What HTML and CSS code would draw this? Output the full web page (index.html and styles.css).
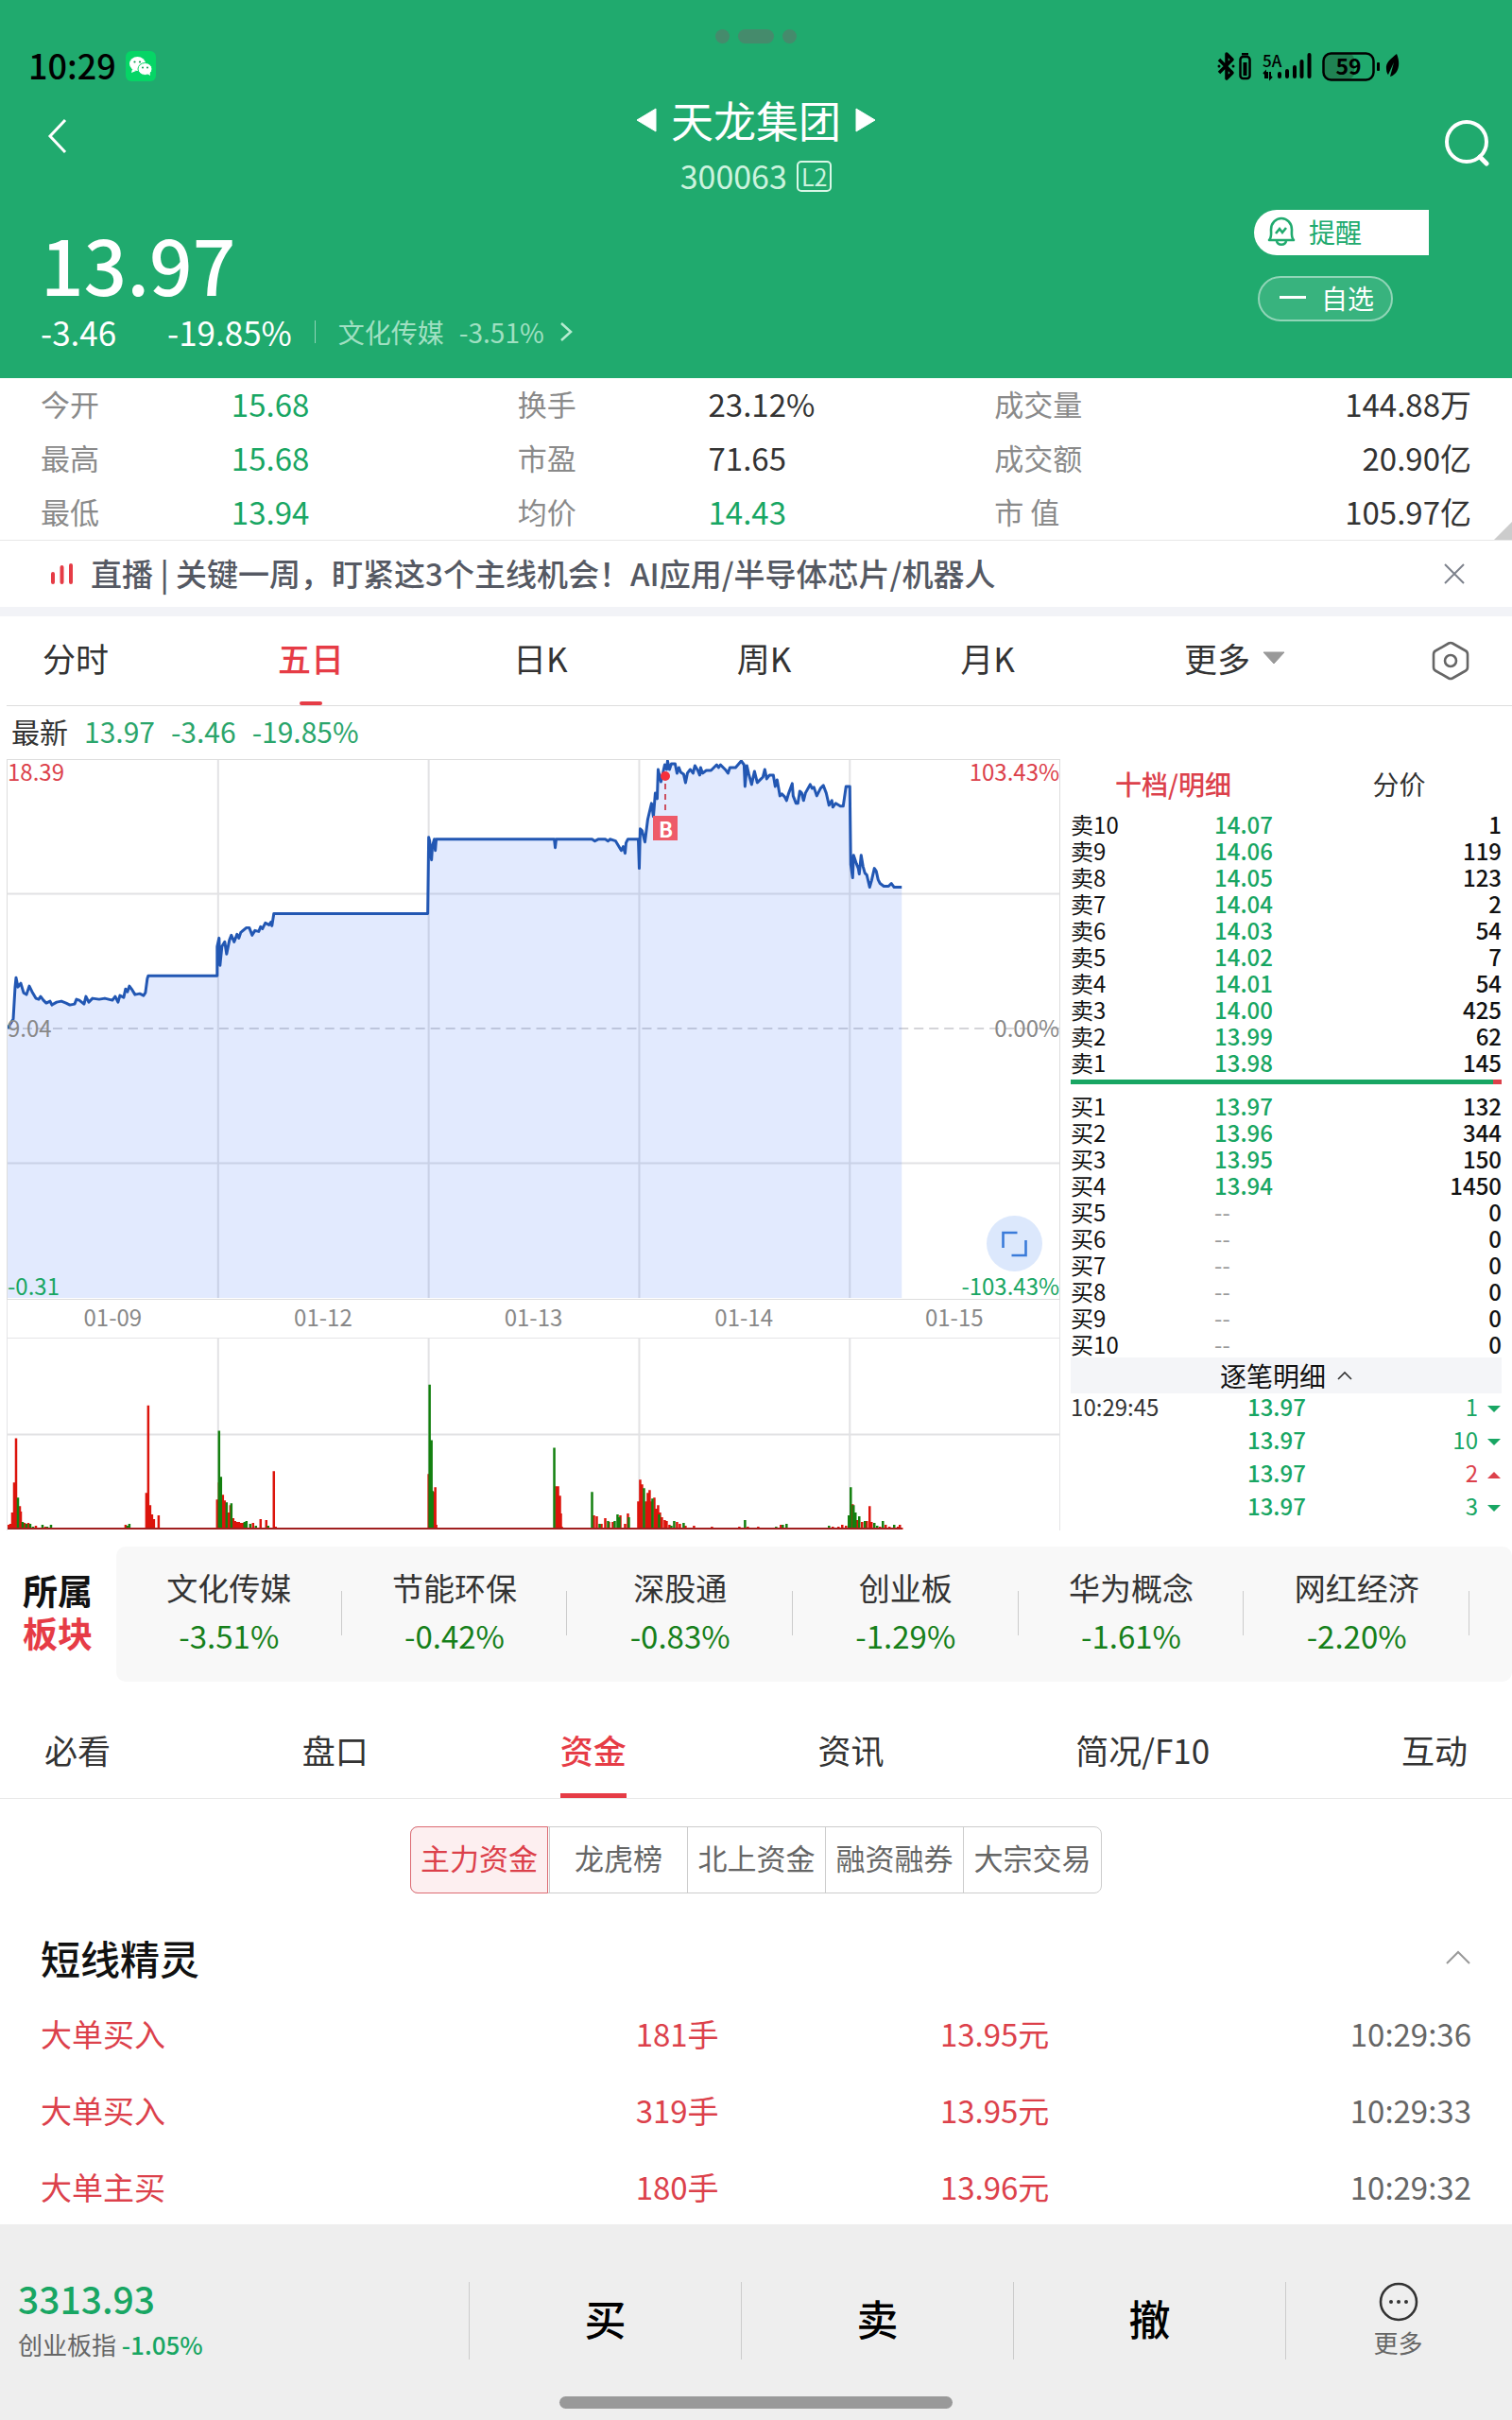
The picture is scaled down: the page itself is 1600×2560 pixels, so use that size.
FILE: index.html
```html
<!DOCTYPE html>
<html lang="zh-CN">
<head>
    <meta charset="UTF-8">
    <meta name="viewport" content="width=device-width, initial-scale=1.0">
    <meta name="theme-color" content="#20aa6e">
    <title>天龙集团 300063</title>
    <link rel="stylesheet" href="styles.css">
</head>
<body>
    <header class="header">
        <div class="camera"><span></span><span class="wide"></span><span></span></div>

        <div class="status-bar">
            <span class="clock">10:29</span>
            <svg class="wechat" width="32" height="32" viewBox="0 0 32 32">
                <rect width="32" height="32" rx="6" fill="#06d566"/>
                <ellipse cx="12.500" cy="13.500" rx="8.500" ry="7.500" fill="#fff"/>
                <path d="M7 19l-1 4 5-2z" fill="#fff"/>
                <ellipse cx="20.500" cy="19" rx="7.500" ry="6.500" fill="#fff" stroke="#06d566"/>
                <path d="M23 24l3 2-0.500-4z" fill="#fff"/>
                <g fill="#0a9a4e"><circle cx="9.500" cy="11.500" r="1.100"/><circle cx="15" cy="11.500" r="1.100"/><circle cx="18" cy="17.500" r="1"/><circle cx="23" cy="17.500" r="1"/></g>
            </svg>
            <svg class="status-icons" width="196" height="34" viewBox="0 0 196 34">
                <!-- bluetooth -->
                <path d="M2 10l14 14-6 6V4l6 6L2 24" fill="none" stroke="#000" stroke-width="3.500" stroke-linejoin="round"/>
                <circle cx="2" cy="17" r="1.500"/><circle cx="17" cy="17" r="1.500"/>
                <rect x="24.500" y="7" width="10" height="23" rx="3" fill="none" stroke="#000" stroke-width="2.500"/>
                <rect x="27.500" y="13" width="4" height="14"/><rect x="26" y="3" width="7" height="2.500"/>
                <!-- signal -->
                <text x="48" y="18" font-size="17" font-weight="500">5A</text>
                <path d="M49 25l2-2v7M53 23v7M56 23v7l2-2" fill="none" stroke="#000" stroke-width="2"/>
                <path d="M66 25v3M74 22v6M82 18v10M89.500 12v16M97.500 5v23" stroke="#000" stroke-width="4" stroke-linecap="round"/>
                <!-- battery -->
                <rect x="112" y="3" width="33" height="28" rx="7" fill="#208253"/>
                <rect x="112.500" y="3.500" width="53" height="28" rx="8" fill="none" stroke="#000" stroke-width="2.500"/>
                <text x="139" y="25.500" font-size="23" font-weight="700" text-anchor="middle">59</text>
                <rect x="169" y="13" width="3" height="9" rx="1"/>
                <path d="M190 4c-6 5-12 9-11 16 0 4 2 6 2 6l6-13-4 15c8-2 12-12 7-24z"/>
            </svg>
        </div>

        <div class="title-bar">
            <button class="icon-btn back" aria-label="返回">
                <svg width="24" height="40" viewBox="0 0 24 40"><path d="M20 3L4 20l16 17" fill="none" stroke="#fff" stroke-width="3"/></svg>
            </button>
            <div class="stock">
                <div class="stock-name">
                    <button class="icon-btn" aria-label="上一只">
                        <svg width="22" height="26" viewBox="0 0 22 26"><path d="M21 1v24L1 13z" fill="#fff" stroke="#fff" stroke-linejoin="round"/></svg>
                    </button>
                    <h1>天龙集团</h1>
                    <button class="icon-btn" aria-label="下一只">
                        <svg width="22" height="26" viewBox="0 0 22 26"><path d="M1 1v24l20-12z" fill="#fff" stroke="#fff" stroke-linejoin="round"/></svg>
                    </button>
                </div>
                <div class="stock-code">300063<span class="level">L2</span></div>
            </div>
            <button class="icon-btn search" aria-label="搜索">
                <svg width="50" height="50" viewBox="0 0 50 50"><circle cx="24" cy="24" r="21" fill="none" stroke="#fff" stroke-width="4"/><path d="M38 40l7 7" stroke="#fff" stroke-width="5" stroke-linecap="round"/></svg>
            </button>
        </div>

        <div class="price-row">
            <div>
                <div class="price">13.97</div>
                <div class="change">
                    <span class="change-value">-3.46</span>
                    <span>-19.85%</span>
                    <a class="sector-link" href="#"><span>文化传媒</span><span>-3.51%</span>
                        <svg width="14" height="22" viewBox="0 0 14 22"><path d="M2 2l10 9-10 9" fill="none" stroke="#b6ecd1" stroke-width="2.500"/></svg>
                    </a>
                </div>
            </div>
            <div class="actions">
                <button class="alert-btn">
                    <svg width="30" height="32" viewBox="0 0 30 32" fill="none" stroke="#20aa6e" stroke-width="2.600"><path d="M2 25c3-3 2-7 2-11 0-7 5-12 11-12s11 5 11 12c0 4-1 8 2 11z" stroke-linejoin="round"/><path d="M10 26c1 5 9 5 10 0M9 18l4-5 3 4 4-5"/></svg>
                    提醒
                </button>
                <button class="watch-btn"><i></i>自选</button>
            </div>
        </div>
    </header>

    <dl class="quotes">
        <div><dt>今开</dt><dd class="down">15.68</dd></div>
        <div><dt>换手</dt><dd>23.12%</dd></div>
        <div><dt>成交量</dt><dd>144.88万</dd></div>
        <div><dt>最高</dt><dd class="down">15.68</dd></div>
        <div><dt>市盈</dt><dd>71.65</dd></div>
        <div><dt>成交额</dt><dd>20.90亿</dd></div>
        <div><dt>最低</dt><dd class="down">13.94</dd></div>
        <div><dt>均价</dt><dd class="down">14.43</dd></div>
        <div><dt>市 值</dt><dd>105.97亿</dd></div>
    </dl>

    <div class="live">
        <svg width="26" height="24" viewBox="0 0 26 24"><path d="M3 12v9M12.500 5v16M22 3v18" stroke="#e63c46" stroke-width="4" stroke-linecap="round"/></svg>
        <a href="#">直播 | 关键一周，盯紧这3个主线机会！AI应用/半导体芯片/机器人</a>
        <button class="icon-btn" aria-label="关闭">
            <svg width="22" height="22" viewBox="0 0 22 22"><path d="M1 1l20 20M21 1L1 21" stroke="#7d828c" stroke-width="2"/></svg>
        </button>
    </div>

    <div class="period-bar">
        <nav class="periods">
            <button>分时</button>
            <button class="active">五日</button>
            <button>日K</button>
            <button>周K</button>
            <button>月K</button>
            <button>更多<svg width="24" height="14" viewBox="0 0 24 14"><path d="M1 1h22L12 13z" fill="#999" stroke="#999" stroke-linejoin="round"/></svg></button>
        </nav>
        <button class="icon-btn" aria-label="图表设置">
            <svg width="40" height="42" viewBox="0 0 40 42" fill="none" stroke="#666" stroke-width="2.600"><path d="M18 2.500q2-1 4 0l14 8q2 1 2 4v13q0 3-2 4l-14 8q-2 1-4 0l-14-8q-2-1-2-4v-13q0-3 2-4z"/><circle cx="20" cy="21" r="6"/></svg>
        </button>
    </div>

    <p class="latest">最新<span>13.97</span><span>-3.46</span><span>-19.85%</span></p>

    <main class="market">
        <section class="chart">
            <div class="price-chart">
                <svg viewBox="7 802 1114 572" preserveAspectRatio="none">
                    <path class="grid-line" d="M7 944H1121M7 1230H1121M230 802V1373M453 802V1373M676 802V1373M899 802V1373"/>
                    <path class="grid-line dashed" d="M7 1087H1121"/>
                    <path class="area" d="M7 1087L13 1077L15 1043L16 1033L18 1043L21 1039L24 1049L27 1051L30 1042L33 1048L37 1055L40 1056L42 1053L45 1057L48 1060L52 1058L54 1062L59 1059L64 1058L69 1060L73 1062L78 1061L80 1056L83 1057L88 1061L90 1053L93 1059L97 1055L104 1056L110 1055L118 1057L121 1053L124 1059L126 1052L130 1054L132 1045L134 1048L136 1042L139 1046L142 1051L147 1050L151 1052L153 1049L155 1034L156 1031H229V1000L231 991L232 1020L234 1000L237 995L239 1008L242 993L244 988L247 995L250 987L252 991L254 985L260 980L263 980L266 988L269 983L273 984L275 979L277 981L280 975L284 977L286 974L287 978L289 965H452L453 884L454 888L456 908L457 893L459 886L460 898L461 886H586L587 895L588 886H626L629 888L633 886H640L643 888L645 886L651 888L654 893L657 898L659 894L661 901L662 890L664 886H675L676 917L677 875L679 877L682 889L685 865L689 848L691 862L693 837L695 843L696 812L699 825L703 807L705 812L706 803L708 812L710 806H714L716 816L718 810L720 815L723 817L725 826L727 816L730 812L733 816L735 808L738 813L740 818L741 810L743 816L747 813L752 813L758 807L760 810L762 807L767 812L770 816L772 810H778L784 803L787 807L788 830L790 808L792 817L795 828L798 814L801 826L804 823L807 820L809 812L811 822L814 818H818L820 830L822 823L825 840L827 838L830 841L832 845L834 838L838 827L839 840L842 848H844L846 835L848 837L850 845L852 837L857 828L859 832L861 831L864 840L868 832L871 829L874 837L877 850L880 845L881 852L884 848L889 851H892L895 830H899L900 913L902 927L903 903L906 912L908 917L909 923L911 903L913 915L915 922L917 924L920 937L922 930L925 917L927 920L929 929L931 933L935 936H940L943 933L946 937H954V1373H7Z"/>
                    <path class="line" d="M7 1087L13 1077L15 1043L16 1033L18 1043L21 1039L24 1049L27 1051L30 1042L33 1048L37 1055L40 1056L42 1053L45 1057L48 1060L52 1058L54 1062L59 1059L64 1058L69 1060L73 1062L78 1061L80 1056L83 1057L88 1061L90 1053L93 1059L97 1055L104 1056L110 1055L118 1057L121 1053L124 1059L126 1052L130 1054L132 1045L134 1048L136 1042L139 1046L142 1051L147 1050L151 1052L153 1049L155 1034L156 1031H229V1000L231 991L232 1020L234 1000L237 995L239 1008L242 993L244 988L247 995L250 987L252 991L254 985L260 980L263 980L266 988L269 983L273 984L275 979L277 981L280 975L284 977L286 974L287 978L289 965H452L453 884L454 888L456 908L457 893L459 886L460 898L461 886H586L587 895L588 886H626L629 888L633 886H640L643 888L645 886L651 888L654 893L657 898L659 894L661 901L662 890L664 886H675L676 917L677 875L679 877L682 889L685 865L689 848L691 862L693 837L695 843L696 812L699 825L703 807L705 812L706 803L708 812L710 806H714L716 816L718 810L720 815L723 817L725 826L727 816L730 812L733 816L735 808L738 813L740 818L741 810L743 816L747 813L752 813L758 807L760 810L762 807L767 812L770 816L772 810H778L784 803L787 807L788 830L790 808L792 817L795 828L798 814L801 826L804 823L807 820L809 812L811 822L814 818H818L820 830L822 823L825 840L827 838L830 841L832 845L834 838L838 827L839 840L842 848H844L846 835L848 837L850 845L852 837L857 828L859 832L861 831L864 840L868 832L871 829L874 837L877 850L880 845L881 852L884 848L889 851H892L895 830H899L900 913L902 927L903 903L906 912L908 917L909 923L911 903L913 915L915 922L917 924L920 937L922 930L925 917L927 920L929 929L931 933L935 936H940L943 933L946 937H954"/>
                </svg>
                <span class="axis top-left up">18.39</span>
                <span class="axis top-right up">103.43%</span>
                <span class="axis mid-left">9.04</span>
                <span class="axis mid-right">0.00%</span>
                <span class="axis bottom-left down">-0.31</span>
                <span class="axis bottom-right down">-103.43%</span>
                <div class="buy-mark"><i></i><b>B</b></div>
                <button class="expand" aria-label="全屏">
                    <svg width="28" height="28" viewBox="0 0 28 28"><path d="M2 18V2h15M11 26h15V10" fill="none" stroke="#3a7bd9" stroke-width="2.600"/></svg>
                </button>
            </div>
            <div class="dates"><span>01-09</span><span>01-12</span><span>01-13</span><span>01-14</span><span>01-15</span></div>
            <div class="volume-chart">
                <svg viewBox="7 1414 1114 204" preserveAspectRatio="none">
                    <path class="grid-line" d="M7 1516H1121M230 1414V1617M453 1414V1617M676 1414V1617M899 1414V1617"/>
                    <path class="vol-up" d="M8 1617v-5M10 1617v-6M12 1617v-18M14 1617v-50M16 1617v-97M20 1617v-25M21 1617v-19M25 1617v-7M29 1617v-7M37 1617v-4M47 1617v-3M60 1617v-2M80 1617v-2M120 1617v-2M127 1617v-2M132 1617v-5M154 1617v-39M156 1617v-132M158 1617v-26M160 1617v-16M162 1617v-11M167 1617v-15M229 1617v-32M231 1617v-50M235 1617v-37M237 1617v-31M241 1617v-18M243 1617v-26M246 1617v-12M248 1617v-9M250 1617v-8M252 1617v-8M254 1617v-7M256 1617v-7M267 1617v-7M275 1617v-11M281 1617v-10M289 1617v-62M291 1617v-3M453 1617v-59M458 1617v-40M460 1617v-45M461 1617v-5M588 1617v-46M590 1617v-46M592 1617v-36M593 1617v-17M594 1617v-3M628 1617v-15M631 1617v-14M636 1617v-6M640 1617v-12M644 1617v-8M648 1617v-8M656 1617v-15M661 1617v-6M664 1617v-17M675 1617v-30M677 1617v-53M679 1617v-48M683 1617v-30M685 1617v-39M687 1617v-42M689 1617v-30M692 1617v-34M694 1617v-22M696 1617v-26M698 1617v-18M700 1617v-13M703 1617v-10M705 1617v-9M708 1617v-5M716 1617v-8M719 1617v-6M725 1617v-4M734 1617v-4M747 1617v-2M753 1617v-3M757 1617v-2M782 1617v-3M791 1617v-3M802 1617v-3M810 1617v-2M826 1617v-5M835 1617v-2M881 1617v-3M887 1617v-3M891 1617v-5M895 1617v-4M902 1617v-27M907 1617v-10M912 1617v-8M917 1617v-9M920 1617v-25M922 1617v-8M931 1617v-3M937 1617v-5M941 1617v-3M950 1617v-3M952 1617v-5M954 1617v-2"/>
                    <path class="vol-down" d="M18 1617v-34M23 1617v-8M27 1617v-6M31 1617v-6M34 1617v-3M44 1617v-5M49 1617v-3M53 1617v-5M72 1617v-2M103 1617v-2M134 1617v-4M136 1617v-6M233 1617v-56M239 1617v-29M244 1617v-28M258 1617v-8M260 1617v-9M264 1617v-6M270 1617v-4M283 1617v-4M231 1617v-105M454 1617v-154M456 1617v-95M457 1617v-41M586 1617v-87M626 1617v-40M634 1617v-6M643 1617v-9M650 1617v-9M653 1617v-16M655 1617v-13M665 1617v-13M681 1617v-44M690 1617v-33M697 1617v-16M713 1617v-9M723 1617v-7M710 1617v-4M740 1617v-2M763 1617v-2M788 1617v-10M795 1617v-2M821 1617v-3M828 1617v-5M832 1617v-6M840 1617v-2M856 1617v-1M877 1617v-4M884 1617v-2M898 1617v-15M900 1617v-45M903 1617v-26M905 1617v-18M909 1617v-14M915 1617v-9M925 1617v-7M928 1617v-4M934 1617v-9M946 1617v-5"/>
                    <path class="vol-base" d="M7 1616H954"/>
                </svg>
            </div>
        </section>

        <section class="depth">
            <nav class="depth-tabs">
                <button class="active">十档/明细</button>
                <button>分价</button>
            </nav>
            <table class="book">
                <tr><td>卖10</td><td>14.07</td><td>1</td></tr>
                <tr><td>卖9</td><td>14.06</td><td>119</td></tr>
                <tr><td>卖8</td><td>14.05</td><td>123</td></tr>
                <tr><td>卖7</td><td>14.04</td><td>2</td></tr>
                <tr><td>卖6</td><td>14.03</td><td>54</td></tr>
                <tr><td>卖5</td><td>14.02</td><td>7</td></tr>
                <tr><td>卖4</td><td>14.01</td><td>54</td></tr>
                <tr><td>卖3</td><td>14.00</td><td>425</td></tr>
                <tr><td>卖2</td><td>13.99</td><td>62</td></tr>
                <tr><td>卖1</td><td>13.98</td><td>145</td></tr>
            </table>
            <div class="ratio"></div>
            <table class="book">
                <tr><td>买1</td><td>13.97</td><td>132</td></tr>
                <tr><td>买2</td><td>13.96</td><td>344</td></tr>
                <tr><td>买3</td><td>13.95</td><td>150</td></tr>
                <tr><td>买4</td><td>13.94</td><td>1450</td></tr>
                <tr><td>买5</td><td class="none">--</td><td>0</td></tr>
                <tr><td>买6</td><td class="none">--</td><td>0</td></tr>
                <tr><td>买7</td><td class="none">--</td><td>0</td></tr>
                <tr><td>买8</td><td class="none">--</td><td>0</td></tr>
                <tr><td>买9</td><td class="none">--</td><td>0</td></tr>
                <tr><td>买10</td><td class="none">--</td><td>0</td></tr>
            </table>
            <button class="ticks-toggle">逐笔明细
                <svg width="16" height="10" viewBox="0 0 16 10"><path d="M1 9l7-7 7 7" fill="none" stroke="#333" stroke-width="1.600"/></svg>
            </button>
            <table class="ticks">
                <tr><td>10:29:45</td><td>13.97</td><td class="down">1<i></i></td></tr>
                <tr><td></td><td>13.97</td><td class="down">10<i></i></td></tr>
                <tr><td></td><td>13.97</td><td class="up">2<i></i></td></tr>
                <tr><td></td><td>13.97</td><td class="down">3<i></i></td></tr>
            </table>
        </section>
    </main>

    <section class="boards">
        <h2>所属<em>板块</em></h2>
        <div class="board-list">
            <a href="#">文化传媒<span>-3.51%</span></a>
            <a href="#">节能环保<span>-0.42%</span></a>
            <a href="#">深股通<span>-0.83%</span></a>
            <a href="#">创业板<span>-1.29%</span></a>
            <a href="#">华为概念<span>-1.61%</span></a>
            <a href="#">网红经济<span>-2.20%</span></a>
        </div>
    </section>

    <nav class="info-tabs">
        <button>必看</button>
        <button>盘口</button>
        <button class="active">资金</button>
        <button>资讯</button>
        <button>简况/F10</button>
        <button>互动</button>
    </nav>

    <div class="segments">
        <button class="active">主力资金</button>
        <button>龙虎榜</button>
        <button>北上资金</button>
        <button>融资融券</button>
        <button>大宗交易</button>
    </div>

    <section class="events">
        <div class="events-head">
            <h2>短线精灵</h2>
            <button class="icon-btn" aria-label="收起">
                <svg width="28" height="16" viewBox="0 0 28 16"><path d="M2 14L14 2l12 12" fill="none" stroke="#999" stroke-width="2"/></svg>
            </button>
        </div>
        <table>
            <tr><td>大单买入</td><td>181手</td><td>13.95元</td><td>10:29:36</td></tr>
            <tr><td>大单买入</td><td>319手</td><td>13.95元</td><td>10:29:33</td></tr>
            <tr><td>大单主买</td><td>180手</td><td>13.96元</td><td>10:29:32</td></tr>
        </table>
    </section>

    <footer class="footer">
        <div class="trade-bar">
            <a class="index" href="#">
                <strong>3313.93</strong>
                <span>创业板指 <b>-1.05%</b></span>
            </a>
            <button>买</button>
            <button>卖</button>
            <button>撤</button>
            <button class="more">
                <svg width="42" height="42" viewBox="0 0 42 42"><circle cx="21" cy="21" r="19" fill="none" stroke="#333" stroke-width="2.600"/><g fill="#333"><circle cx="13" cy="21" r="2"/><circle cx="21" cy="21" r="2"/><circle cx="29" cy="21" r="2"/></g></svg>
                更多
            </button>
        </div>
        <div class="home-bar"></div>
    </footer>
</body>
</html>
```

FILE: styles.css
```css
* {
    margin: 0;
    padding: 0;
    box-sizing: border-box;
}

body {
    font-family: "Noto Sans CJK SC", "Noto Sans", sans-serif;
    background: #fff;
    color: #333;
}

button {
    font: inherit;
    color: inherit;
    background: none;
    border: none;
    cursor: pointer;
}

a {
    color: inherit;
    text-decoration: none;
}

svg {
    display: block;
}

table {
    width: 100%;
    border-collapse: collapse;
    table-layout: fixed;
}

.icon-btn {
    flex: none;
}

.up {
    color: #dc414b;
}

.down {
    color: #18a663;
}

/* header */
.header {
    position: relative;
    background: #20aa6e;
    color: #fff;
    padding-bottom: 28px;
}

.camera {
    position: absolute;
    top: 31px;
    left: 0;
    right: 0;
    display: flex;
    justify-content: center;
    gap: 9px;
}

.camera span {
    width: 15px;
    height: 15px;
    border-radius: 8px;
    background: #458b6c;
}

.camera .wide {
    width: 38px;
}

.status-bar {
    display: flex;
    align-items: center;
    padding: 50px 116px 6px 30px;
    color: #000;
}

.clock {
    padding-bottom: 4px;
    font-size: 36px;
    font-weight: 500;
    line-height: 36px;
}

.wechat {
    margin-left: 10px;
}

.status-icons {
    margin-left: auto;
}

.title-bar {
    display: grid;
    grid-template-columns: 1fr auto 1fr;
    align-items: start;
    padding: 0 22px;
}

.back {
    padding: 28px 27px 0;
    justify-self: start;
}

.search {
    padding-top: 30px;
    justify-self: end;
}

.stock {
    text-align: center;
}

.stock-name {
    display: flex;
    align-items: center;
    gap: 15px;
}

.stock-name h1 {
    font-size: 45px;
    font-weight: 400;
    line-height: 62px;
}

.stock-code {
    display: flex;
    align-items: center;
    justify-content: center;
    gap: 10px;
    font-size: 34px;
    line-height: 56px;
    color: #cbf3de;
}

.level {
    border: 2px solid #d9f7e7;
    border-radius: 5px;
    padding: 0 3px;
    font-size: 25px;
    line-height: 29px;
}

.price-row {
    display: flex;
    justify-content: space-between;
    padding: 8px 88px 0 43px;
}

.price {
    padding-top: 10px;
    font-size: 80px;
    font-weight: 500;
    line-height: 92px;
}

.change {
    display: flex;
    align-items: center;
    padding-top: 6px;
    font-size: 35px;
    line-height: 42px;
}

.change-value {
    width: 134px;
}

.sector-link {
    display: flex;
    align-items: center;
    gap: 16px;
    margin-left: 24px;
    padding-left: 24px;
    border-left: 1px solid #90d5b7;
    font-size: 28px;
    line-height: 24px;
    color: #a0e0c2;
}

.actions {
    display: flex;
    flex-direction: column;
    align-items: flex-start;
    gap: 22px;
}

.actions button {
    display: flex;
    align-items: center;
    height: 48px;
    font-size: 28px;
    line-height: 42px;
}

.actions .alert-btn {
    gap: 14px;
    width: 185px;
    padding-left: 14px;
    padding-bottom: 3px;
    border-radius: 24px 0 0 24px;
    background: #fff;
    color: #20aa6e;
}

.actions .watch-btn {
    gap: 16px;
    margin-left: 4px;
    padding: 0 18px 3px 21px;
    border: 2px solid #90d5b7;
    border-radius: 24px;
    background: #38b37e;
}

.watch-btn i {
    width: 28px;
    height: 3px;
    background: #fff;
}

/* quote figures */
.quotes {
    position: relative;
    display: grid;
    grid-template-columns: repeat(3, 1fr);
    padding: 0 43px;
    border-bottom: 1px solid #e8e8e8;
}

.quotes div {
    display: flex;
    height: 57px;
    line-height: 54px;
}

.quotes dt {
    width: 40%;
    font-size: 31px;
    color: #8a8a8a;
}

.quotes dd {
    font-size: 33px;
}

.quotes div:nth-child(3n) dd {
    margin-left: auto;
}

.quotes::after {
    content: "";
    position: absolute;
    right: 0;
    bottom: 0;
    border-left: 19px solid transparent;
    border-bottom: 19px solid #ccc;
}

.live {
    display: flex;
    align-items: center;
    gap: 17px;
    padding: 0 50px 0 53px;
    border-bottom: 10px solid #f2f3f7;
    font-size: 33px;
    line-height: 68px;
    color: #555963;
}

.live a {
    flex: 1;
    padding-bottom: 2px;
    font-weight: 500;
}

/* period tabs */
.period-bar {
    display: flex;
    align-items: center;
    gap: 155px;
    margin-left: 7px;
    padding: 0 45px 0 38px;
    border-bottom: 1px solid #ddd;
}

.periods {
    flex: 1;
    display: flex;
    justify-content: space-between;
}

.periods button {
    position: relative;
    display: flex;
    align-items: center;
    gap: 13px;
    font-size: 35px;
    line-height: 88px;
    padding-bottom: 6px;
}

.periods .active {
    color: #e63c46;
    font-weight: 500;
}

.periods .active::after {
    content: "";
    position: absolute;
    left: 50%;
    bottom: 0;
    width: 24px;
    height: 4px;
    margin-left: -12px;
    border-radius: 2px;
    background: #e63c46;
}

.latest {
    display: flex;
    gap: 17px;
    padding: 0 12px 4px;
    font-size: 30px;
    line-height: 52px;
}

.latest span {
    color: #2aa56b;
}

/* chart and order book */
.market {
    display: grid;
    grid-template-columns: 7fr 3fr;
    padding-left: 7px;
}

.price-chart {
    position: relative;
    border: 1px solid #ddd;
}

.price-chart svg,
.volume-chart svg {
    width: 100%;
}

.price-chart > svg {
    height: 570px;
}

.grid-line {
    fill: none;
    stroke: #e2e2e4;
    stroke-width: 2;
}

.dashed {
    stroke: #d4d4d8;
    stroke-dasharray: 10 6;
}

.area {
    fill: rgba(48, 105, 250, 0.14);
}

.line {
    fill: none;
    stroke: #2257b3;
    stroke-width: 3;
    stroke-linejoin: round;
}

.axis {
    position: absolute;
    font-size: 24px;
    line-height: 24px;
}

.top-left {
    top: 0;
    left: 0;
}

.top-right {
    top: 0;
    right: 0;
}

.mid-left,
.mid-right {
    top: 50%;
    margin-top: -14px;
    color: #888;
}

.mid-left {
    left: 0;
}

.mid-right {
    right: 0;
}

.bottom-left {
    bottom: 2px;
    left: 0;
}

.bottom-right {
    bottom: 2px;
    right: 0;
}

.buy-mark {
    position: absolute;
    left: 61.4%;
    top: 12px;
    width: 26px;
    display: flex;
    flex-direction: column;
    align-items: center;
}

.buy-mark i {
    width: 10px;
    height: 10px;
    border-radius: 5px;
    background: #f5303c;
}

.buy-mark i::after {
    content: "";
    display: block;
    height: 28px;
    margin: 13px 4px 0;
    border-left: 2px dashed #cc5060;
}

.buy-mark b {
    width: 26px;
    margin-top: 37px;
    background: #ee5b69;
    color: #fff;
    font-size: 22px;
    line-height: 26px;
    text-align: center;
}

.expand {
    position: absolute;
    right: 18px;
    bottom: 29px;
    width: 59px;
    height: 59px;
    padding: 15px;
    border-radius: 50%;
    background: #dce8fc;
}

.dates {
    display: grid;
    grid-template-columns: repeat(5, 1fr);
    border: solid #e4e4e6;
    border-width: 0 1px;
    font-size: 24px;
    line-height: 36px;
    padding-bottom: 4px;
    text-align: center;
    color: #888;
}

.volume-chart {
    border: solid #e4e4e6;
    border-width: 1px 1px 0;
}

.volume-chart svg {
    height: 203px;
}

.vol-up,
.vol-down {
    fill: none;
    stroke: #dc140c;
    stroke-width: 2.5;
}

.vol-down {
    stroke: #13800f;
}

.vol-base {
    stroke: #a02020;
    stroke-width: 2;
}

.depth-tabs {
    display: grid;
    grid-template-columns: 1fr 1fr;
    padding-bottom: 3px;
    font-size: 28px;
    line-height: 52px;
}

.depth-tabs .active {
    color: #dc414b;
    font-weight: 500;
}

.book,
.ratio,
.ticks-toggle,
.ticks {
    width: calc(100% - 22px);
    margin-left: 11px;
}

.book td {
    height: 28px;
    font-size: 24px;
    line-height: 28px;
    color: #111;
}

.book td:nth-child(2) {
    color: #18a663;
    font-weight: 500;
}

.book td:nth-child(3) {
    font-weight: 500;
    text-align: right;
}

.book td.none {
    color: #999;
    font-weight: 400;
}

.ratio {
    height: 5px;
    margin-top: 4px;
    margin-bottom: 9px;
    background: linear-gradient(90deg, #18a663 98%, #dc414b 98%);
}

.ticks-toggle {
    display: flex;
    align-items: center;
    justify-content: center;
    gap: 12px;
    background: #f4f5f8;
    color: #111;
    font-size: 28px;
    line-height: 38px;
}

.ticks td {
    height: 35px;
    font-size: 24px;
    line-height: 28px;
    vertical-align: top;
}

.ticks td:first-child {
    width: 41%;
}

.ticks td:nth-child(2) {
    color: #18a663;
    font-weight: 500;
}

.ticks td:last-child {
    text-align: right;
}

.ticks i {
    display: inline-block;
    margin: 0 1px 4px 10px;
    border: 7px solid transparent;
    border-bottom: 0;
    border-top-color: #18a663;
}

.ticks .up i {
    border-top: 0;
    border-bottom: 7px solid #dc414b;
}

/* related boards */
.boards {
    display: flex;
    align-items: center;
    margin-top: 17px;
}

.boards h2 {
    width: 123px;
    padding-left: 24px;
    padding-bottom: 6px;
    font-size: 37px;
    line-height: 45px;
    color: #111;
}

.boards em {
    display: block;
    font-style: normal;
    color: #e63c46;
}

.board-list {
    flex: 1;
    display: grid;
    grid-template-columns: repeat(6, 1fr);
    padding: 18px 45px 23px 0;
    border-radius: 10px;
    background: #f8f8f8;
}

.board-list a {
    position: relative;
    font-size: 33px;
    line-height: 51px;
    text-align: center;
}

.board-list span {
    display: block;
    color: #16801a;
}

.board-list a::after {
    content: "";
    position: absolute;
    right: 0;
    top: 29px;
    height: 47px;
    border-right: 1px solid #ccc;
}

.info-tabs {
    display: flex;
    justify-content: space-between;
    margin-top: 26px;
    padding: 0 47px;
    border-bottom: 1px solid #e8e8e8;
    font-size: 35px;
    line-height: 92px;
}

.info-tabs button {
    border-bottom: 5px solid transparent;
}

.info-tabs .active {
    border-color: #e63c46;
    color: #e63c46;
    font-weight: 500;
}

.segments {
    display: grid;
    grid-template-columns: repeat(5, 1fr);
    width: fit-content;
    margin: 29px auto 0;
    border: 1px solid #ccc;
    border-radius: 8px;
    font-size: 31px;
    line-height: 64px;
    color: #666;
}

.segments button {
    width: 146px;
    padding-bottom: 5px;
    border-left: 1px solid #ccc;
}

.segments .active {
    margin: -1px 0 -1px -1px;
    border: 1px solid #dc6a72;
    border-radius: 8px 0 0 8px;
    background: #fdeff0;
    color: #dc414b;
}

/* big order events */
.events {
    padding: 38px 43px 0;
}

.events-head {
    display: flex;
    align-items: center;
    justify-content: space-between;
    margin-bottom: 9px;
}

.events h2 {
    font-size: 42px;
    font-weight: 500;
    line-height: 60px;
    color: #111;
}

.events td {
    height: 81px;
    font-size: 33px;
    color: #dc414b;
    text-align: right;
}

.events td:first-child {
    width: 29%;
    text-align: left;
}

.events td:nth-child(2) {
    width: 18.4%;
}

.events td:nth-child(3) {
    width: 23.1%;
}

.events td:last-child {
    color: #666;
}

/* trade bar */
.footer {
    padding: 61px 0 14px;
    background: #eee;
}

.trade-bar {
    display: grid;
    grid-template-columns: 31fr 18fr 18fr 18fr 15fr;
}

.trade-bar button {
    height: 82px;
    padding-bottom: 6px;
    border-left: 1px solid #ccc;
    color: #000;
    font-size: 44px;
    font-weight: 500;
    line-height: 72px;
}

.index {
    padding-left: 19px;
    color: #18a663;
}

.index strong {
    display: block;
    font-size: 39px;
    font-weight: 500;
    line-height: 34px;
}

.index span {
    display: block;
    padding-top: 12px;
    font-size: 26px;
    line-height: 40px;
    color: #666;
}

.index b {
    font-weight: 500;
    color: #18a663;
}

.trade-bar .more {
    display: flex;
    flex-direction: column;
    align-items: center;
    gap: 6px;
    padding: 0 2px 0 0;
    color: #666;
    font-size: 26px;
    font-weight: 400;
    line-height: 32px;
}

.home-bar {
    width: 26%;
    height: 13px;
    margin: 35px auto 0;
    border-radius: 7px;
    background: #999;
}
```
